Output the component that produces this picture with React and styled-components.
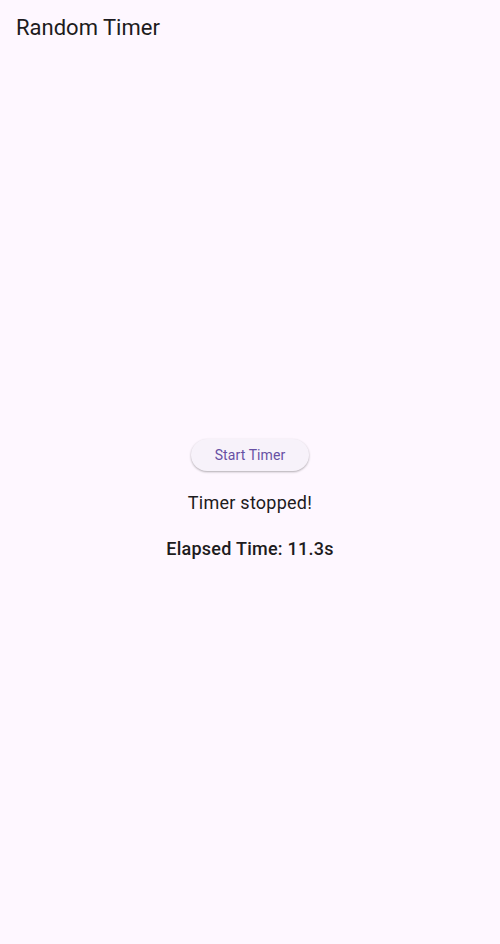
import React from "react";
import styled, { createGlobalStyle } from "styled-components";

const Global = createGlobalStyle`
  html, body { margin: 0; padding: 0; background: #fef7ff; }
  body { font-family: Roboto, "Noto Sans", sans-serif; }
  #root { min-height: 100vh; }
`;

const Page = styled.div`
  display: flex;
  flex-direction: column;
  height: 944px;
  background: #fef7ff;
  color: #1d1b20;
`;

const AppBar = styled.header`
  height: 56px;
  display: flex;
  align-items: center;
  padding: 0 16px;
  flex-shrink: 0;
`;

const Title = styled.h1`
  margin: 0;
  font-size: 22px;
  font-weight: 400;
  line-height: 28px;
`;

const Body = styled.main`
  flex: 1;
  display: flex;
  flex-direction: column;
  align-items: center;
  justify-content: center;
`;

const Button = styled.button`
  height: 32px;
  padding: 0 24px;
  border: none;
  border-radius: 16px;
  background: #f7f2fa;
  color: #6750a4;
  font-family: Roboto, sans-serif;
  font-size: 14px;
  font-weight: 400;
  letter-spacing: 0.1px;
  box-shadow: 0 1px 2px rgba(0, 0, 0, 0.22), 0 1px 3px rgba(0, 0, 0, 0.1);
  cursor: pointer;
`;

const Message = styled.p`
  margin: ${(p) => p.$top}px 0 0;
  font-size: 18px;
  line-height: 24px;
  letter-spacing: 0.25px;
  font-weight: ${(p) => (p.$bold ? 500 : 400)};
`;

export default function App() {
  return (
    <Page>
      <Global />
      <AppBar>
        <Title>Random Timer</Title>
      </AppBar>
      <Body>
        <Button>Start Timer</Button>
        <Message $top={20}>Timer stopped!</Message>
        <Message $top={22} $bold>Elapsed Time: 11.3s</Message>
      </Body>
    </Page>
  );
}
